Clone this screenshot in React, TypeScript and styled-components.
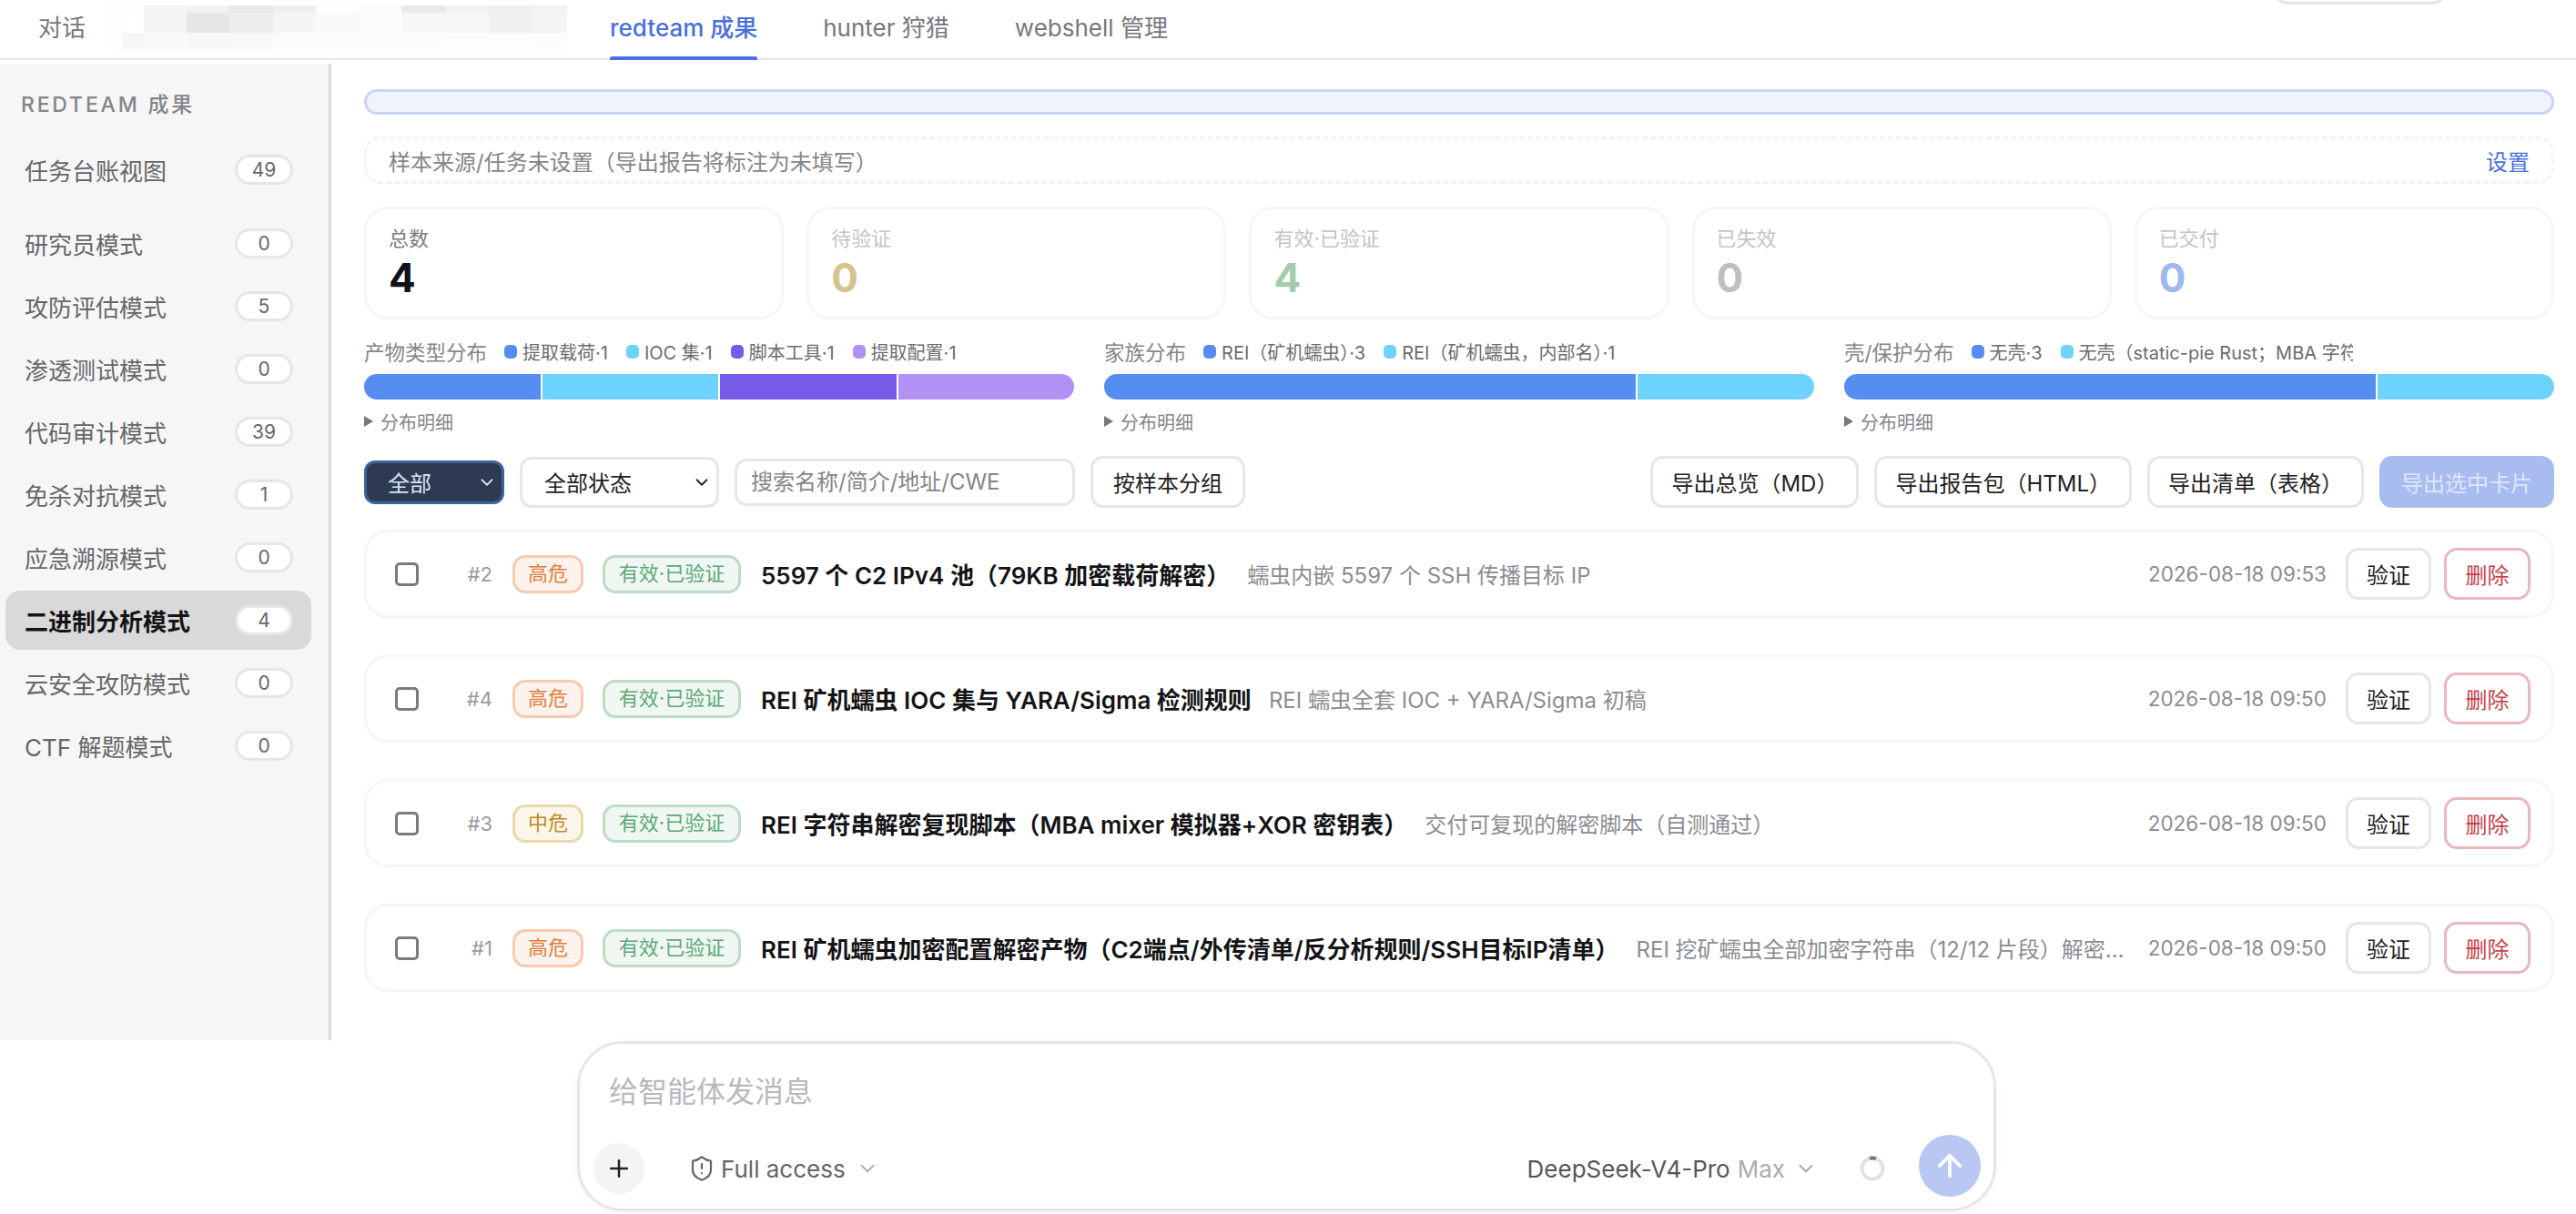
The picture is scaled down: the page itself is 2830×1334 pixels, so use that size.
import React from "react";
import styled, { createGlobalStyle } from "styled-components";
import { ArrowUp, ChevronDown, Plus, ShieldAlert } from "lucide-react";

const GlobalStyle = createGlobalStyle`
  * { box-sizing: border-box; }
  html, body { margin: 0; padding: 0; background: #fff; }
  body {
    font-family: Inter, "Noto Sans CJK SC", sans-serif;
    color: #222;
    overflow: hidden;
  }
`;

const mosaicCols = [118, 134, 158, 205, 252, 300, 347, 394, 441, 490, 537, 583, 623];
const mosaicRows = [
  { y: 6, h: 8, c: ["#fdfdfd", "#fdfdfd", "#f5f5f5", "#f2f2f2", "#e9e9ea", "#efefef", "#fefefe", "#fbfbfb", "#e9e9ea", "#f3f3f3", "#efefef", "#f2f2f2"] },
  { y: 14, h: 22, c: ["#fdfdfd", "#ffffff", "#f4f4f4", "#e7e7e7", "#eeeeef", "#f5f5f5", "#fafafa", "#fafbfa", "#f6f7f6", "#f6f6f6", "#f0f0f0", "#f4f4f4"] },
  { y: 36, h: 18, c: ["#fdfdfd", "#f6f6f6", "#f9f9f9", "#f7f7f7", "#f8f8f8", "#fbfbfb", "#fbfbfb", "#fcfcfc", "#fcfcfc", "#fdfdfd", "#fdfdfd", "#fcfcfc"] },
];

const modes = [
  { name: "研究员模式", count: 0 },
  { name: "攻防评估模式", count: 5 },
  { name: "渗透测试模式", count: 0 },
  { name: "代码审计模式", count: 39 },
  { name: "免杀对抗模式", count: 1 },
  { name: "应急溯源模式", count: 0 },
  { name: "二进制分析模式", count: 4, active: true },
  { name: "云安全攻防模式", count: 0 },
  { name: "CTF 解题模式", count: 0 },
];

const stats = [
  { label: "总数", value: 4, color: "#111216", labelColor: "#7c7c82" },
  { label: "待验证", value: 0, color: "#d4c48f", labelColor: "#c4c4c6" },
  { label: "有效·已验证", value: 4, color: "#a6cbab", labelColor: "#c4c4c6" },
  { label: "已失效", value: 0, color: "#bfbfc1", labelColor: "#c4c4c6" },
  { label: "已交付", value: 0, color: "#9fb9ec", labelColor: "#c4c4c6" },
];

const BLUE = "#568df0";
const CYAN = "#6dd2fd";
const VIOLET = "#775cea";
const LILAC = "#b092f7";

const distributions = [
  {
    title: "产物类型分布",
    legend: [
      { text: "提取载荷·1", color: BLUE },
      { text: "IOC 集·1", color: CYAN },
      { text: "脚本工具·1", color: VIOLET },
      { text: "提取配置·1", color: LILAC },
    ],
    segments: [
      { grow: 1, color: BLUE },
      { grow: 1, color: CYAN },
      { grow: 1, color: VIOLET },
      { grow: 1, color: LILAC },
    ],
  },
  {
    title: "家族分布",
    legend: [
      { text: "REI\uFF08矿机蠕虫\uFF09·3", color: BLUE },
      { text: "REI\uFF08矿机蠕虫\uFF0C内部名\uFF09·1", color: CYAN },
    ],
    segments: [
      { grow: 3, color: BLUE },
      { grow: 1, color: CYAN },
    ],
  },
  {
    title: "壳/保护分布",
    clip: 419,
    legend: [
      { text: "无壳·3", color: BLUE },
      { text: "无壳\uFF08static-pie Rust\uFF1BMBA 字符串混淆\uFF09·1", color: CYAN },
    ],
    segments: [
      { grow: 3, color: BLUE },
      { grow: 1, color: CYAN },
    ],
  },
];

const findings = [
  {
    id: 2,
    level: "高危",
    tone: "high",
    title: "5597 个 C2 IPv4 池\uFF0879KB 加密载荷解密\uFF09",
    desc: "蠕虫内嵌 5597 个 SSH 传播目标 IP",
    time: "2026-08-18 09:53",
  },
  {
    id: 4,
    level: "高危",
    tone: "high",
    title: "REI 矿机蠕虫 IOC 集与 YARA/Sigma 检测规则",
    desc: "REI 蠕虫全套 IOC + YARA/Sigma 初稿",
    time: "2026-08-18 09:50",
  },
  {
    id: 3,
    level: "中危",
    tone: "mid",
    title: "REI 字符串解密复现脚本\uFF08MBA mixer 模拟器+XOR 密钥表\uFF09",
    desc: "交付可复现的解密脚本\uFF08自测通过\uFF09",
    time: "2026-08-18 09:50",
  },
  {
    id: 1,
    level: "高危",
    tone: "high",
    title: "REI 矿机蠕虫加密配置解密产物\uFF08C2端点/外传清单/反分析规则/SSH目标IP清单\uFF09",
    desc: "REI 挖矿蠕虫全部加密字符串\uFF0812/12 片段\uFF09解密结果与配置结构说明",
    time: "2026-08-18 09:50",
  },
];

const exportsList = ["导出总览\uFF08MD\uFF09", "导出报告包\uFF08HTML\uFF09", "导出清单\uFF08表格\uFF09"];

const App = () => {
  return (
    <>
      <GlobalStyle />
      <Page>
        <Header>
          <Tab>对话</Tab>
          <Mosaic width="505" height="54" viewBox="118 0 505 54">
            {mosaicRows.map((row) =>
              row.c.map((fill, i) => (
                <rect
                  key={`${row.y}-${i}`}
                  x={mosaicCols[i]}
                  y={row.y}
                  width={mosaicCols[i + 1] - mosaicCols[i]}
                  height={row.h}
                  fill={fill}
                />
              ))
            )}
          </Mosaic>
          <Tab $active>redteam 成果</Tab>
          <Tab>hunter 狩猎</Tab>
          <Tab>webshell 管理</Tab>
          <CutOffButton />
        </Header>

        <Body>
          <Sidebar>
            <SideTitle>REDTEAM 成果</SideTitle>
            <NavItem $first>
              任务台账视图
              <CountBadge>49</CountBadge>
            </NavItem>
            <NavList>
              {modes.map((m) => (
                <NavItem key={m.name} $active={m.active}>
                  {m.name}
                  <CountBadge>{m.count}</CountBadge>
                </NavItem>
              ))}
            </NavList>
          </Sidebar>

          <Main>
            <NoticeBar />
            <SourceBox>
              <span>{"样本来源/任务未设置\uFF08导出报告将标注为未填写\uFF09"}</span>
              <SourceLink>设置</SourceLink>
            </SourceBox>

            <StatGrid>
              {stats.map((s) => (
                <StatCard key={s.label}>
                  <StatLabel $color={s.labelColor}>{s.label}</StatLabel>
                  <StatValue $color={s.color}>{s.value}</StatValue>
                </StatCard>
              ))}
            </StatGrid>

            <DistGrid>
              {distributions.map((d) => (
                <div key={d.title}>
                  <DistHead>
                    <DistTitle>{d.title}</DistTitle>
                    <Legend $clip={d.clip}>
                      {d.legend.map((l) => (
                        <LegendItem key={l.text}>
                          <LegendDot $color={l.color} />
                          {l.text}
                        </LegendItem>
                      ))}
                    </Legend>
                  </DistHead>
                  <DistBar>
                    {d.segments.map((s, i) => (
                      <DistSegment key={i} $grow={s.grow} $color={s.color} />
                    ))}
                  </DistBar>
                  <DistDetail>
                    <Triangle />
                    分布明细
                  </DistDetail>
                </div>
              ))}
            </DistGrid>

            <Toolbar>
              <DarkSelect>
                全部
                <ChevronDown size={22} strokeWidth={2} />
              </DarkSelect>
              <LightSelect>
                全部状态
                <ChevronDown size={22} strokeWidth={2} />
              </LightSelect>
              <SearchInput placeholder="搜索名称/简介/地址/CWE" />
              <GroupButton>按样本分组</GroupButton>
              <ToolSpacer />
              {exportsList.map((label) => (
                <ToolButton key={label}>{label}</ToolButton>
              ))}
              <ExportSelected>导出选中卡片</ExportSelected>
            </Toolbar>

            <RowList>
              {findings.map((f) => (
                <FindingRow key={f.id}>
                  <RowCheck type="checkbox" />
                  <RowId>#{f.id}</RowId>
                  <LevelTag $tone={f.tone}>{f.level}</LevelTag>
                  <StatusTag>有效·已验证</StatusTag>
                  <RowTitle>{f.title}</RowTitle>
                  <RowDesc>{f.desc}</RowDesc>
                  <RowTime>{f.time}</RowTime>
                  <VerifyButton>验证</VerifyButton>
                  <DeleteButton>删除</DeleteButton>
                </FindingRow>
              ))}
            </RowList>
          </Main>
        </Body>

        <Composer>
          <Placeholder>给智能体发消息</Placeholder>
          <ComposerBar>
            <ComposerGroup>
              <AttachButton>
                <Plus size={30} strokeWidth={2} color="#222" />
              </AttachButton>
              <AccessPicker>
                <ShieldAlert size={30} strokeWidth={1.8} color="#63666b" />
                <AccessLabel>Full access</AccessLabel>
                <ChevronDown size={26} strokeWidth={1.8} color="#b0b1b6" />
              </AccessPicker>
            </ComposerGroup>
            <ComposerGroup>
              <ModelName>DeepSeek-V4-Pro</ModelName>
              <ModelTier>Max</ModelTier>
              <ModelChevron>
                <ChevronDown size={26} strokeWidth={1.8} color="#a5a6ab" />
              </ModelChevron>
              <Spinner width="28" height="28" viewBox="0 0 28 28">
                <circle cx="14" cy="14" r="11.5" fill="none" stroke="#e2e2e2" strokeWidth="4" />
                <path d="M11 2.9 A11.5 11.5 0 0 1 18 3.2" fill="none" stroke="#77787d" strokeWidth="4" />
              </Spinner>
              <SendButton>
                <ArrowUp size={38} strokeWidth={2.4} color="#fff" />
              </SendButton>
            </ComposerGroup>
          </ComposerBar>
        </Composer>
      </Page>
    </>
  );
};

export default App;

const Page = styled.div`
  width: 2830px;
  height: 1334px;
  overflow: hidden;
  background: #fff;
`;

const Header = styled.header`
  position: relative;
  display: flex;
  height: 66px;
  padding-left: 42px;
  border-bottom: 2px solid #e6e6e6;
`;

const Tab = styled.div<{ $active?: boolean }>`
  position: relative;
  height: 64px;
  margin-right: 72px;
  font-size: 26px;
  line-height: 62px;
  white-space: nowrap;
  color: ${(p) => (p.$active ? "#4a6fe0" : "#77777d")};
  font-weight: ${(p) => (p.$active ? 500 : 400)};
  &:first-child {
    margin-right: 24px;
  }
  &::after {
    content: ${(p) => (p.$active ? '""' : "none")};
    position: absolute;
    left: 0;
    right: 0;
    bottom: -2px;
    height: 4px;
    border-radius: 2px 2px 0 0;
    background: #4a6fe0;
  }
`;

const Mosaic = styled.svg`
  flex: none;
  margin-right: 47px;
`;

const CutOffButton = styled.div`
  position: absolute;
  left: 2493px;
  top: -40px;
  width: 199px;
  height: 45px;
  border: 3px solid #e5e5e5;
  border-radius: 22px;
  background: #fff;
`;

const Body = styled.div`
  display: flex;
  height: 1073px;
  margin-top: 4px;
`;

const Sidebar = styled.aside`
  flex: none;
  width: 364px;
  padding: 30px 20px 0 6px;
  background: #f6f6f6;
  border-right: 3px solid #dcdcdc;
`;

const SideTitle = styled.div`
  height: 30px;
  margin: 0 0 24px 17px;
  font-size: 23px;
  line-height: 30px;
  font-weight: 500;
  letter-spacing: 2.8px;
  color: #85858a;
`;

const NavList = styled.div`
  display: flex;
  flex-direction: column;
  gap: 4px;
`;

const NavItem = styled.div<{ $active?: boolean; $first?: boolean }>`
  display: flex;
  align-items: center;
  justify-content: space-between;
  width: 336px;
  height: 65px;
  margin-bottom: ${(p) => (p.$first ? "16px" : "0")};
  padding: 0 20px 0 21px;
  border-radius: 16px;
  font-size: 26px;
  color: ${(p) => (p.$active ? "#141416" : "#66676b")};
  font-weight: ${(p) => (p.$active ? 700 : 400)};
  background: ${(p) => (p.$active ? "#d9d9d9" : "transparent")};
`;

const CountBadge = styled.span`
  flex: none;
  width: 64px;
  height: 33px;
  border: 3px solid #e6e6e6;
  border-radius: 17px;
  background: #fff;
  text-align: center;
  font-size: 21px;
  font-weight: 400;
  line-height: 27px;
  color: #66676b;
`;

const Main = styled.main`
  flex: 1;
  min-width: 0;
  padding: 28px 24px 0 36px;
`;

const NoticeBar = styled.div`
  height: 28px;
  margin-bottom: 24px;
  border: 3px solid #c9d3f8;
  border-radius: 14px;
  background: #f1f4fe;
`;

const SourceBox = styled.div`
  display: flex;
  align-items: center;
  justify-content: space-between;
  height: 52px;
  margin-bottom: 25px;
  padding: 0 24px;
  border: 3px dashed #f3f3f3;
  border-radius: 18px;
  font-size: 24px;
  color: #85858b;
`;

const SourceLink = styled.span`
  color: #4a6fe0;
`;

const StatGrid = styled.div`
  display: grid;
  grid-template-columns: repeat(5, 1fr);
  gap: 25px;
  margin-bottom: 21px;
`;

const StatCard = styled.div`
  height: 124px;
  padding: 16px 24px 0;
  border: 3px solid #f6f6f6;
  border-radius: 26px;
`;

const StatLabel = styled.div<{ $color: string }>`
  font-size: 22px;
  line-height: 32px;
  color: ${(p) => p.$color};
`;

const StatValue = styled.div<{ $color: string }>`
  margin-top: 2px;
  font-size: 44px;
  line-height: 50px;
  font-weight: 700;
  color: ${(p) => p.$color};
`;

const DistGrid = styled.div`
  display: grid;
  grid-template-columns: repeat(3, 1fr);
  gap: 33px;
  margin-bottom: 24px;
`;

const DistHead = styled.div`
  display: flex;
  align-items: center;
  height: 28px;
  margin-bottom: 11px;
  white-space: nowrap;
`;

const DistTitle = styled.span`
  flex: none;
  margin-right: 19px;
  font-size: 22.5px;
  color: #85858b;
`;

const Legend = styled.div<{ $clip?: number }>`
  display: flex;
  gap: 20px;
  overflow: hidden;
  ${(p) => (p.$clip ? `max-width: ${p.$clip}px;` : "")}
`;

const LegendItem = styled.span`
  display: flex;
  flex: none;
  align-items: center;
  gap: 6px;
  font-size: 20px;
  color: #6b6b70;
`;

const LegendDot = styled.i<{ $color: string }>`
  width: 14px;
  height: 15px;
  border-radius: 5px;
  background: ${(p) => p.$color};
`;

const DistBar = styled.div`
  display: flex;
  height: 28px;
  margin-bottom: 10px;
  border-radius: 14px;
  overflow: hidden;
`;

const DistSegment = styled.div<{ $grow: number; $color: string }>`
  flex: ${(p) => p.$grow} 1 0;
  background: ${(p) => p.$color};
  border-right: 2px solid #fff;
  &:last-child {
    border-right: 0;
  }
`;

const DistDetail = styled.div`
  display: flex;
  align-items: center;
  gap: 8px;
  height: 28px;
  font-size: 20px;
  color: #85858b;
`;

const Triangle = styled.i`
  width: 0;
  height: 0;
  border-left: 10px solid #77777d;
  border-top: 6px solid transparent;
  border-bottom: 6px solid transparent;
`;

const Toolbar = styled.div`
  display: flex;
  align-items: center;
  gap: 17px;
  height: 57px;
  margin-bottom: 24px;
  font-size: 24px;
`;

const ToolSpacer = styled.div`
  flex: 1;
`;

const DarkSelect = styled.div`
  display: flex;
  align-items: center;
  justify-content: space-between;
  width: 154px;
  height: 48px;
  padding: 0 5px 0 23px;
  border: 3px solid #3f6296;
  border-radius: 12px;
  background: #2e3a52;
  color: #d8e4f2;
`;

const LightSelect = styled.div`
  display: flex;
  align-items: center;
  justify-content: space-between;
  width: 219px;
  height: 56px;
  padding: 0 5px 0 24px;
  border: 3px solid #e6e6e6;
  border-radius: 13px;
  background: #fff;
  color: #222;
`;

const SearchInput = styled.input`
  width: 374px;
  height: 52px;
  padding: 0 15px;
  border: 3px solid #e6e6e6;
  border-radius: 13px;
  outline: none;
  font: inherit;
  font-size: 24px;
  &::placeholder {
    color: #85858b;
    opacity: 1;
  }
`;

const ToolButton = styled.button`
  height: 57px;
  padding: 0 20px;
  border: 3px solid #e6e6e6;
  border-radius: 14px;
  background: #fff;
  font: inherit;
  font-size: 24px;
  color: #222;
  white-space: nowrap;
`;

const GroupButton = styled(ToolButton)`
  padding: 0 22px;
`;

const ExportSelected = styled.button`
  width: 192px;
  height: 57px;
  padding: 0;
  border: 0;
  border-radius: 14px;
  background: #a8bcf0;
  font: inherit;
  font-size: 24px;
  color: #e0e7fb;
`;

const RowList = styled.div`
  display: flex;
  flex-direction: column;
  gap: 40px;
`;

const FindingRow = styled.div`
  display: flex;
  align-items: center;
  height: 97px;
  padding: 0 23px 0 31px;
  border: 3px solid #f6f6f6;
  border-radius: 26px;
`;

const RowCheck = styled.input`
  appearance: none;
  flex: none;
  width: 26px;
  height: 26px;
  margin: 0;
  border: 3px solid #7b7b7b;
  border-radius: 5px;
  background: #fff;
`;

const RowId = styled.span`
  flex: none;
  width: 81px;
  margin-right: 22px;
  text-align: right;
  font-size: 22px;
  color: #9a9aa0;
`;

const levelTones: Record<string, { border: string; bg: string; text: string }> = {
  high: { border: "#f5cbb0", bg: "#fdf3ec", text: "#e27d3c" },
  mid: { border: "#e9d8ab", bg: "#faf6ea", text: "#c0891f" },
};

const LevelTag = styled.span<{ $tone: string }>`
  flex: none;
  width: 78px;
  height: 42px;
  margin-right: 21px;
  border: 3px solid ${(p) => levelTones[p.$tone].border};
  border-radius: 14px;
  background: ${(p) => levelTones[p.$tone].bg};
  color: ${(p) => levelTones[p.$tone].text};
  text-align: center;
  font-size: 22px;
  line-height: 35px;
`;

const StatusTag = styled.span`
  flex: none;
  width: 152px;
  height: 42px;
  margin-right: 22px;
  border: 3px solid #bddcc5;
  border-radius: 14px;
  background: #f0f7f2;
  color: #5ca977;
  text-align: center;
  font-size: 22px;
  line-height: 35px;
`;

const RowTitle = styled.span`
  flex: none;
  margin-right: 19px;
  font-size: 26px;
  font-weight: 600;
  color: #141416;
  white-space: nowrap;
`;

const RowDesc = styled.span`
  flex: 1;
  min-width: 0;
  overflow: hidden;
  white-space: nowrap;
  text-overflow: ellipsis;
  font-size: 24px;
  color: #8c8c92;
`;

const RowTime = styled.span`
  flex: none;
  margin: 0 21px 0 20px;
  font-size: 22.5px;
  color: #8b8b91;
`;

const VerifyButton = styled.button`
  flex: none;
  width: 94px;
  height: 57px;
  padding: 0;
  border: 3px solid #e6e6e6;
  border-radius: 14px;
  background: #fff;
  font: inherit;
  font-size: 24px;
  color: #222;
`;

const DeleteButton = styled(VerifyButton)`
  width: 95px;
  margin-left: 14px;
  border-color: #e8b8bd;
  color: #c9404a;
`;

const Composer = styled.section`
  display: flex;
  flex-direction: column;
  justify-content: space-between;
  width: 1559px;
  height: 187px;
  margin: 1px 0 0 634px;
  padding: 31px 14px 12px 15px;
  border: 3px solid #e6e6e6;
  border-radius: 50px;
  background: #fff;
  box-shadow: 0 2px 8px rgba(0, 0, 0, 0.04);
`;

const Placeholder = styled.div`
  padding-left: 17px;
  font-size: 32px;
  line-height: 44px;
  color: #b8b8bd;
`;

const ComposerBar = styled.div`
  display: flex;
  align-items: center;
  justify-content: space-between;
  height: 70px;
`;

const ComposerGroup = styled.div`
  display: flex;
  align-items: center;
`;

const AttachButton = styled.div`
  display: flex;
  align-items: center;
  justify-content: center;
  width: 56px;
  height: 56px;
  margin-top: 6px;
  border-radius: 50%;
  background: #f3f4f6;
`;

const AccessPicker = styled.div`
  display: flex;
  align-items: center;
  margin: 6px 0 0 48px;
`;

const AccessLabel = styled.span`
  margin: 0 11px 0 6px;
  font-size: 26px;
  color: #63666b;
`;

const ModelName = styled.span`
  margin-top: 6px;
  font-size: 26px;
  color: #55565a;
`;

const ModelTier = styled.span`
  margin: 6px 0 0 8px;
  font-size: 26px;
  color: #ababb0;
`;

const ModelChevron = styled.span`
  display: flex;
  margin: 6px 0 0 10px;
`;

const Spinner = styled.svg`
  margin: 6px 37px 0 46px;
`;

const SendButton = styled.div`
  display: flex;
  align-items: center;
  justify-content: center;
  width: 68px;
  height: 68px;
  border-radius: 50%;
  background: #b9c8f2;
`;
